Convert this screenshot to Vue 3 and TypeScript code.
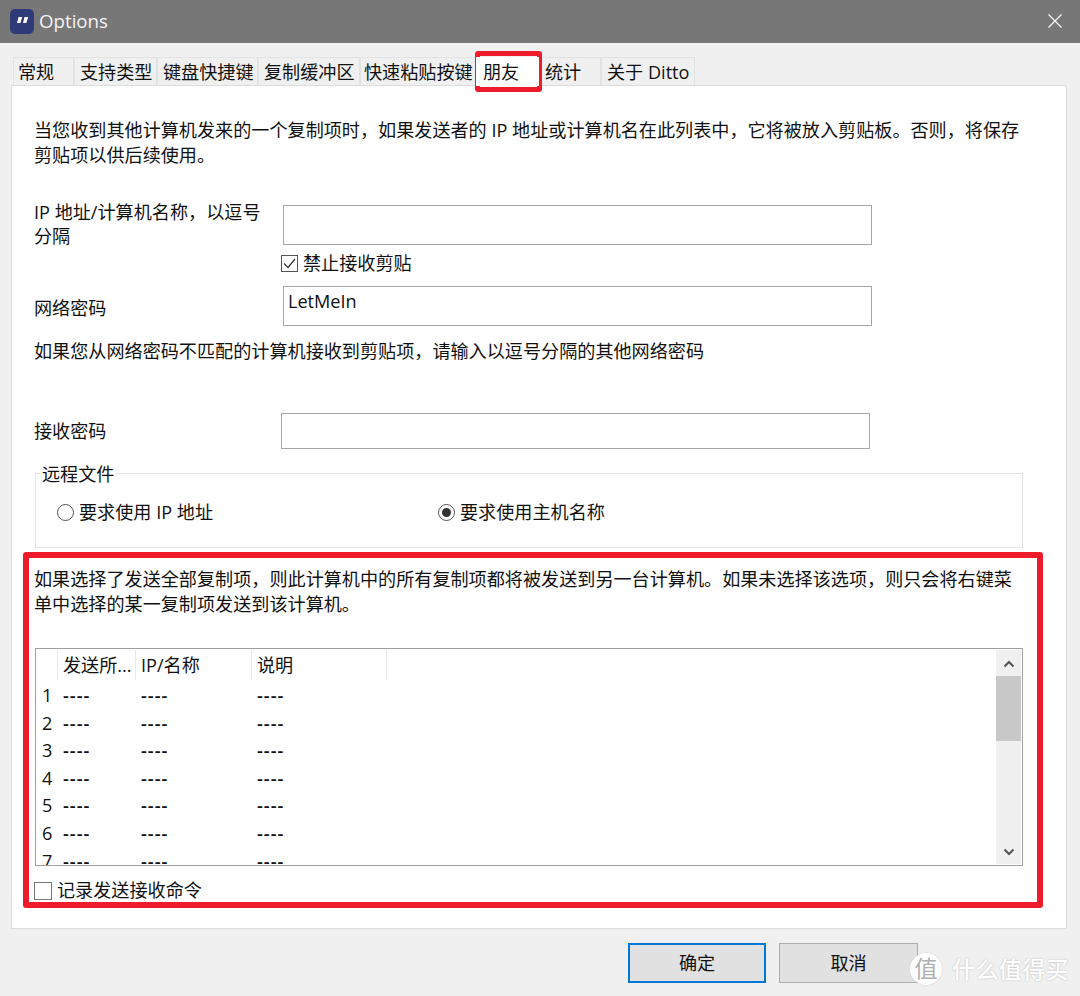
<script setup lang="ts">
const tabs: { label: string; width: number; pad: number; active?: boolean }[] = [
  { label: '常规', width: 61, pad: 4 },
  { label: '支持类型', width: 83, pad: 5 },
  { label: '键盘快捷键', width: 101, pad: 5 },
  { label: '复制缓冲区', width: 102, pad: 5 },
  { label: '快速粘贴按键', width: 116, pad: 3 },
  { label: '朋友', width: 63, pad: 6, active: true },
  { label: '统计', width: 62, pad: 5 },
  { label: '关于 Ditto', width: 94, pad: 5 },
]
const rows = [1, 2, 3, 4, 5, 6, 7]
</script>

<template>
  <div class="window">
    <header class="titlebar">
      <svg class="app-icon" width="24" height="25" viewBox="0 0 24 25">
        <rect width="24" height="25" rx="5" fill="#2f3a78" />
        <path d="M8.500 8h3.800l-2 6H7zM14.500 8h3.800l-2 6H13z" fill="#fff" />
      </svg>
      <span class="title">Options</span>
      <svg class="close" width="14" height="14" viewBox="0 0 14 14">
        <path d="M.5.5l13 13M13.500.5l-13 13" stroke="#fff" stroke-width="1.1" fill="none" />
      </svg>
    </header>

    <nav class="tabs">
      <div
        v-for="tab in tabs"
        :key="tab.label"
        class="tab"
        :class="{ active: tab.active }"
        :style="{ width: tab.width + 'px', paddingLeft: tab.pad + 'px' }"
      >{{ tab.label }}</div>
    </nav>

    <main class="panel">
      <p class="para first">当您收到其他计算机发来的一个复制项时，如果发送者的 IP 地址或计算机名在此列表中，它将被放入剪贴板。否则，将保存剪贴项以供后续使用。</p>

      <div class="form-row ip-row">
        <label class="field-label ip-label">IP 地址/计算机名称，以逗号分隔</label>
        <div class="input tall"></div>
      </div>

      <div class="check-row block-check">
        <span class="box checked">
          <svg width="13" height="11" viewBox="0 0 13 11"><path d="M1 5.500l4 4L12 1" fill="none" stroke="#333" stroke-width="1.2" /></svg>
        </span>
        <span>禁止接收剪贴</span>
      </div>

      <div class="form-row net-row">
        <label class="field-label net-label">网络密码</label>
        <div class="input tall value">LetMeIn</div>
      </div>

      <p class="para other">如果您从网络密码不匹配的计算机接收到剪贴项，请输入以逗号分隔的其他网络密码</p>

      <div class="form-row receive-row">
        <label class="field-label">接收密码</label>
        <div class="input short"></div>
      </div>

      <section class="group">
        <span class="legend">远程文件</span>
        <div class="radio-row">
          <div class="radio-item"><span class="radio"></span><span>要求使用 IP 地址</span></div>
          <div class="radio-item"><span class="radio on"></span><span>要求使用主机名称</span></div>
        </div>
      </section>

      <p class="para send">如果选择了发送全部复制项，则此计算机中的所有复制项都将被发送到另一台计算机。如果未选择该选项，则只会将右键菜单中选择的某一复制项发送到该计算机。</p>

      <section class="table">
        <div class="table-body">
          <div class="thead">
            <span class="th th0"></span>
            <span class="th th1">发送所...</span>
            <span class="th th2">IP/名称</span>
            <span class="th th3">说明</span>
          </div>
          <div v-for="n in rows" :key="n" class="tr">
            <span class="num">{{ n }}</span>
            <span class="td td1">----</span>
            <span class="td td2">----</span>
            <span class="td td3">----</span>
          </div>
        </div>
        <div class="scrollbar">
          <svg class="arrow" width="12" height="8" viewBox="0 0 12 8"><path d="M1.500 6.500L6 2l4.500 4.500" fill="none" stroke="#555" stroke-width="2" /></svg>
          <div class="thumb"></div>
          <div class="track"></div>
          <svg class="arrow" width="12" height="8" viewBox="0 0 12 8"><path d="M1.500 1.500L6 6l4.500-4.500" fill="none" stroke="#555" stroke-width="2" /></svg>
        </div>
      </section>

      <div class="check-row log-check">
        <span class="box large"></span>
        <span>记录发送接收命令</span>
      </div>
    </main>

    <footer class="footer">
      <button class="btn primary">确定</button>
      <button class="btn">取消</button>
    </footer>

    <div class="mark mark-tab"></div>
    <div class="mark mark-box"></div>

    <div class="watermark">
      <span class="wm-circle">值</span>
      <span class="wm-text">什么值得买</span>
    </div>
  </div>
</template>

<style>
html, body { margin: 0; background: #f0f0f0; }
</style>

<style scoped>
.window {
  position: relative;
  width: 1080px;
  height: 996px;
  overflow: hidden;
  background: #f0f0f0;
  color: #111;
  font-family: "Open Sans", "Noto Sans CJK SC", sans-serif;
  font-size: 18.13px;
  line-height: 25px;
}
.titlebar {
  height: 43px;
  background: #777777;
  display: flex;
  align-items: center;
  padding: 0 18px 0 10px;
  color: #f4f4f4;
}
.app-icon { flex: none; margin-top: -1px; }
.title { margin-left: 5px; font-size: 18.700px; margin-top: -2px; }
.close { margin-left: auto; margin-top: -1px; }
.tabs {
  display: flex;
  height: 28px;
  margin-top: 14px;
  padding-left: 13px;
}
.tab {
  box-sizing: border-box;
  flex: none;
  background: #f0f0f0;
  border-top: 1px solid #e2e2e2;
  border-left: 1px solid #e2e2e2;
  border-right: 1px solid #e2e2e2;
  line-height: 29px;
  white-space: nowrap;
}
.tab.active {
  background: #fff;
  border-color: transparent;
  position: relative;
  z-index: 1;
  margin-bottom: -1px;
}
.panel {
  box-sizing: border-box;
  width: 1056px;
  height: 844px;
  margin-left: 11px;
  padding: 0 0 0 23px;
  background: #fff;
  border: 1px solid #dcdcdc;
}
.para { margin: 0 0 0 -1px; width: 988px; }
.first { padding-top: 32px; }
.form-row { display: flex; align-items: flex-start; }
.ip-row { margin-top: 37px; height: 43px; }
.field-label {
  display: block;
  width: 236px;
  flex: none;
  margin-left: -1px;
  line-height: 24px;
}
.ip-label { margin-top: -5px; }
.input {
  box-sizing: border-box;
  width: 589px;
  border: 1px solid #a6a6a6;
  background: #fff;
}
.tall { height: 40px; margin-left: 13px; }
.short { height: 36px; margin-left: 11px; }
.value { padding: 2px 0 0 4px; }
.check-row { display: flex; align-items: center; }
.box {
  box-sizing: border-box;
  width: 17px;
  height: 17px;
  border: 1px solid #555;
  display: flex;
  align-items: center;
  justify-content: center;
  flex: none;
}
.box.large { width: 18px; height: 18px; border: 1.5px solid #777; }
.block-check { margin: 3px 0 0 246px; height: 25px; gap: 5px; }
.net-row { margin-top: 10px; }
.net-label { padding-top: 10px; }
.other { margin-top: 13px; }
.receive-row { margin-top: 49px; }
.receive-row .field-label { padding-top: 6px; }
.group {
  position: relative;
  box-sizing: border-box;
  width: 988px;
  height: 75px;
  margin-top: 24px;
  border: 1px solid #e3e3e3;
}
.legend {
  position: absolute;
  left: 5px;
  top: -12px;
  padding: 0 2px 0 1px;
  background: #fff;
}
.radio-row { display: flex; padding: 26px 0 0 21px; }
.radio-item { display: flex; align-items: center; gap: 5px; height: 25px; }
.radio-item:first-child { width: 381px; }
.radio {
  box-sizing: border-box;
  width: 17px;
  height: 17px;
  border: 1px solid #555;
  border-radius: 50%;
  flex: none;
  position: relative;
}
.radio.on::after {
  content: "";
  position: absolute;
  inset: 3px;
  border-radius: 50%;
  background: #333;
}
.send { margin-top: 19px; }
.table {
  display: flex;
  box-sizing: border-box;
  width: 988px;
  height: 218px;
  margin-top: 31px;
  border: 1px solid #a0a0a0;
  overflow: hidden;
}
.table-body { flex: 1; min-width: 0; overflow: hidden; }
.thead { display: flex; height: 32px; margin-top: 1px; }
.th {
  box-sizing: border-box;
  height: 30px;
  border-right: 1px solid #e8e8e8;
  line-height: 31px;
  white-space: nowrap;
  padding-left: 5px;
}
.th0 { width: 22px; }
.th1 { width: 78px; }
.th2 { width: 116px; }
.th3 { width: 135px; }
.tr { display: flex; height: 27.6px; line-height: 27px; white-space: nowrap; }
.num { width: 22px; padding-left: 6px; box-sizing: border-box; }
.td {
  padding-left: 5px;
  box-sizing: border-box;
  font-weight: 600;
  letter-spacing: 1px;
}
.td1 { width: 78px; }
.td2 { width: 116px; }
.td3 { width: 135px; }
.scrollbar {
  flex: none;
  width: 25px;
  margin: 1px 1px 1px 0;
  background: #f0f0f0;
  display: flex;
  flex-direction: column;
  align-items: center;
}
.arrow { flex: none; margin: 10px 0 8px; }
.thumb { width: 100%; height: 65px; background: #c8c8c8; flex: none; }
.track { flex: 1; }
.log-check { margin: 12px 0 0 -1px; height: 25px; gap: 5px; }
.footer {
  display: flex;
  gap: 13px;
  padding: 14px 0 0 628px;
}
.btn {
  box-sizing: border-box;
  width: 138px;
  height: 40px;
  padding: 0;
  background: #e1e1e1;
  border: 1px solid #adadad;
  color: #111;
  font: inherit;
}
.btn + .btn { width: 139px; }
.primary { border: 2px solid #0078d7; }
.mark {
  position: absolute;
  box-sizing: border-box;
  border-style: solid;
  border-color: #ee1c2b;
  border-radius: 3px;
  pointer-events: none;
}
.mark-tab { left: 475px; top: 51px; width: 67px; height: 41px; border-width: 5.5px; }
.mark-box { left: 23px; top: 552px; width: 1020px; height: 356px; border-width: 6px; }
.watermark {
  position: absolute;
  left: 910px;
  top: 953px;
  display: flex;
  align-items: center;
  gap: 10px;
  color: #fff;
  text-shadow: 0 0 2px #b5b5b5;
}
.wm-circle {
  width: 32px;
  height: 32px;
  border-radius: 50%;
  background: #fff;
  color: #b0b0b0;
  font-size: 23px;
  line-height: 31px;
  text-align: center;
  text-shadow: none;
  box-shadow: 0 0 2px #ccc;
}
.wm-text { font-size: 23px; letter-spacing: 0.4px; font-weight: 500; }
</style>
